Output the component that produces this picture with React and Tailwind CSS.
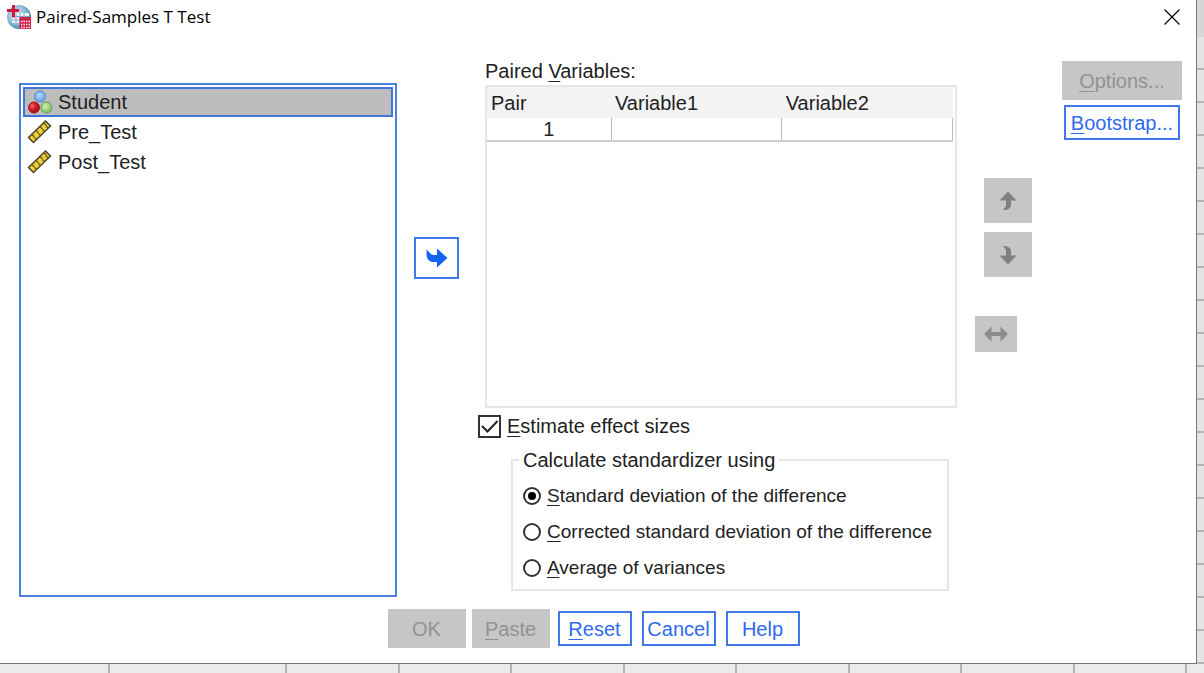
import { useState } from "react";

const variables = [
  { name: "Student", type: "nominal" },
  { name: "Pre_Test", type: "scale" },
  { name: "Post_Test", type: "scale" },
];

const standardizers = [
  { id: "sd", key: "S", rest: "tandard deviation of the difference" },
  { id: "corrected", key: "C", rest: "orrected standard deviation of the difference" },
  { id: "average", key: "A", rest: "verage of variances" },
];

function AppIcon() {
  return (
    <svg width="24" height="24" viewBox="0 0 24 24" aria-hidden="true">
      <defs>
        <radialGradient id="globe" cx="0.4" cy="0.4" r="0.65">
          <stop offset="0" stopColor="#d5e8f4" />
          <stop offset="0.6" stopColor="#8dbbd8" />
          <stop offset="1" stopColor="#3f7ba6" />
        </radialGradient>
      </defs>
      <circle cx="12" cy="12" r="12" fill="url(#globe)" />
      <rect x="5" y="8" width="17" height="10" fill="#eef6fc" />
      <path d="M5 11.500h17M5 15h17M9 8v10M13 8v10M17 8v10" stroke="#82a9cd" strokeWidth="1" />
      <path d="M6.500 0v12.500M0 5.500h12" stroke="#d3173f" strokeWidth="3" />
      <rect x="12.500" y="12" width="11.500" height="12" fill="#cf2448" />
      <path d="M14 16.500h9M14 19.500h9M14 22.500h9" stroke="#fbe4e9" strokeWidth="1.500" strokeDasharray="1.500 1" />
    </svg>
  );
}

function NominalIcon() {
  return (
    <svg width="26" height="24" viewBox="0 0 26 24" aria-hidden="true">
      <defs>
        <radialGradient id="ballBlue" cx="0.45" cy="0.4" r="0.6">
          <stop offset="0" stopColor="#b4d6fa" />
          <stop offset="1" stopColor="#68a2e2" />
        </radialGradient>
        <radialGradient id="ballRed" cx="0.35" cy="0.35" r="0.65">
          <stop offset="0" stopColor="#ee6a70" />
          <stop offset="0.5" stopColor="#cf1f2c" />
          <stop offset="1" stopColor="#a80f1c" />
        </radialGradient>
        <radialGradient id="ballGreen" cx="0.4" cy="0.4" r="0.6">
          <stop offset="0" stopColor="#cdeeb0" />
          <stop offset="1" stopColor="#82bd62" />
        </radialGradient>
      </defs>
      <circle cx="13" cy="6.500" r="5.500" fill="url(#ballBlue)" stroke="#4b84cf" />
      <circle cx="7" cy="17.500" r="5.500" fill="url(#ballRed)" stroke="#a5121e" />
      <circle cx="19.500" cy="17.500" r="5.500" fill="url(#ballGreen)" stroke="#64a049" />
    </svg>
  );
}

function ScaleIcon() {
  return (
    <svg width="26" height="24" viewBox="0 0 26 24" aria-hidden="true">
      <path d="M1.500 17.500L18.500 1L23.500 6L6.500 22.500Z" fill="#f0cf34" stroke="#4b4632" strokeWidth="1.500" />
      <path
        d="M5 14.500l2.500 2.500M9 10.500l2.500 2.500M13 6.500l2.500 2.500M17 3l2.500 2.500M9.500 19.500l-2-2M13.500 15.500l-2-2M17.500 11.500l-2-2M21 8l-2-2"
        stroke="#5d5220"
        strokeWidth="1.200"
      />
    </svg>
  );
}

function DialogButton({ label, mnemonic, disabled }) {
  const text = (
    <>
      {mnemonic && <span className="underline decoration-1 underline-offset-3">{mnemonic}</span>}
      {label}
    </>
  );
  if (disabled) {
    return (
      <button type="button" disabled className="h-[39px] w-full bg-[#c6c6c6] text-[#929292]">
        {text}
      </button>
    );
  }
  return (
    <div className="p-[2px]">
      <button type="button" className="h-[35px] w-full whitespace-nowrap border-2 border-[#4178e8] bg-white text-[#2f69ee]">
        {text}
      </button>
    </div>
  );
}

function VariableList() {
  const [selected, setSelected] = useState("Student");
  return (
    <ul role="listbox" aria-label="Variables" className="mt-[47px] h-[514px] border-2 border-[#4a80e0] p-[2px]">
      {variables.map((v) => (
        <li
          key={v.name}
          role="option"
          aria-selected={selected === v.name}
          onClick={() => setSelected(v.name)}
          className={
            selected === v.name
              ? "flex h-[30px] items-center gap-[5px] border-2 border-[#3f76d8] bg-[#bdbdbd] pl-[2px]"
              : "flex h-[30px] items-center gap-[5px] border-2 border-transparent pl-[2px]"
          }
        >
          {v.type === "nominal" ? <NominalIcon /> : <ScaleIcon />}
          <span>{v.name}</span>
        </li>
      ))}
    </ul>
  );
}

function PairsTable() {
  return (
    <div className="h-[323px] border-2 border-[#e6e6e6] pr-[2px]">
      <table className="w-full table-fixed border-collapse text-left">
        <thead className="bg-[#f3f3f3]">
          <tr className="h-[31px]">
            <th className="w-[124px] pl-1 font-normal">Pair</th>
            <th className="pl-1 font-normal">Variable1</th>
            <th className="pl-1 font-normal">Variable2</th>
          </tr>
        </thead>
        <tbody>
          <tr className="h-[23px] border-b-2 border-[#cccccc] leading-5">
            <td className="border-r border-[#bdbdbd] text-center">1</td>
            <td className="border-r border-[#bdbdbd]"></td>
            <td className="border-r border-[#bdbdbd]"></td>
          </tr>
        </tbody>
      </table>
    </div>
  );
}

function EffectSizes() {
  const [estimate, setEstimate] = useState(true);
  const [standardizer, setStandardizer] = useState("sd");
  return (
    <>
      <label className="mt-[6px] flex h-6 items-center gap-[6px]">
        <span className="relative flex">
          <input
            type="checkbox"
            checked={estimate}
            onChange={(e) => setEstimate(e.target.checked)}
            className="size-[23px] appearance-none border-2 border-[#333333] bg-white"
          />
          {estimate && (
            <svg className="pointer-events-none absolute inset-0" width="23" height="23" viewBox="0 0 23 23">
              <path d="M4 11l5.500 5.500L19.500 6" fill="none" stroke="#222222" strokeWidth="2" />
            </svg>
          )}
        </span>
        <span>
          <span className="underline decoration-1 underline-offset-3">E</span>stimate effect sizes
        </span>
      </label>
      <fieldset className="mt-[10px] mr-2 ml-[33px] h-[143px] border-2 border-[#e6e6e6] pl-[10px]">
        <legend className="-ml-1 px-1 leading-6">Calculate standardizer using</legend>
        <div className="mt-[6px] flex flex-col text-[19px]">
          {standardizers.map((s) => (
            <label key={s.id} className="flex h-9 items-center gap-[6px] whitespace-nowrap">
              <span className="relative flex">
                <input
                  type="radio"
                  name="standardizer"
                  checked={standardizer === s.id}
                  onChange={() => setStandardizer(s.id)}
                  className="size-[18px] appearance-none rounded-full border-2 border-[#333333] bg-white"
                />
                {standardizer === s.id && (
                  <span className="pointer-events-none absolute inset-[5px] rounded-full bg-black" />
                )}
              </span>
              <span>
                <span className="underline decoration-1 underline-offset-3">{s.key}</span>
                {s.rest}
              </span>
            </label>
          ))}
        </div>
      </fieldset>
    </>
  );
}

function OrderButtons() {
  return (
    <div className="pt-[142px]">
      <div className="ml-[9px] flex flex-col gap-[9px]">
        <button type="button" disabled aria-label="Move up" className="flex h-[45px] w-12 items-center justify-center bg-[#c6c6c6]">
          <svg width="18" height="20" viewBox="0 0 18 20" fill="#808080">
            <path d="M9 0.500L17.500 9.500H12V14C12 17 9 19.500 3.500 19C6 17.500 7 16 7 13V9.500H0.500Z" />
          </svg>
        </button>
        <button type="button" disabled aria-label="Move down" className="flex h-[45px] w-12 items-center justify-center bg-[#c6c6c6]">
          <svg width="18" height="20" viewBox="0 0 18 20" fill="#808080">
            <path d="M9 19.500L17.500 10.500H12V6C12 3 9 0.500 3.500 1C6 2.500 7 4 7 7V10.500H0.500Z" />
          </svg>
        </button>
      </div>
      <button type="button" disabled aria-label="Swap variables" className="mt-[39px] flex h-9 w-[42px] items-center justify-center bg-[#c6c6c6]">
        <svg width="24" height="16" viewBox="0 0 24 16" fill="#8c8c8c">
          <path d="M0 8L7.500 0.500V6H16.500V0.500L24 8L16.500 15.500V10H7.500V15.500Z" />
        </svg>
      </button>
    </div>
  );
}

// Edges of the data sheet that stay visible behind the dialog
function SheetRows() {
  return (
    <div className="flex w-[7px] flex-col overflow-hidden bg-[#e4e4e4]">
      <div className="h-[37px] shrink-0 bg-[#d6d6d6]" />
      {Array.from({ length: 19 }, (_, i) => (
        <div key={i} className="h-[33px] shrink-0 border-b-2 border-[#b5b5b5]" />
      ))}
    </div>
  );
}

function SheetColumns() {
  return (
    <div className="flex h-[9px] overflow-hidden bg-[#ebebeb]">
      <div className="w-[110px] shrink-0 border-r-2 border-[#b5b5b5]" />
      <div className="w-[177px] shrink-0 border-r-2 border-[#b5b5b5]" />
      <div className="grid w-[900px] shrink-0 grid-cols-8">
        {Array.from({ length: 8 }, (_, i) => (
          <div key={i} className="border-r-2 border-[#b5b5b5]" />
        ))}
      </div>
    </div>
  );
}

export default function App() {
  return (
    <div className="flex min-h-screen flex-col bg-[#ebebeb]">
      <div className="flex flex-1">
        <main className="flex min-w-0 flex-1 flex-col border-r border-b border-[#777777] bg-white font-['Liberation_Sans',Arial,sans-serif] text-[20px] leading-6 text-[#222222]">
          <header className="mb-[3px] flex h-[33px] items-center gap-[5px] pr-4 pl-[7px]">
            <AppIcon />
            <h1 className="flex-1 font-['Open_Sans','Noto_Sans',sans-serif] text-[17px] text-black">Paired-Samples T Test</h1>
            <button type="button" aria-label="Close">
              <svg width="16" height="16" viewBox="0 0 16 16">
                <path d="M0.500 0.500L15.500 15.500M15.500 0.500L0.500 15.500" stroke="#000000" strokeWidth="1.200" />
              </svg>
            </button>
          </header>

          <div className="grid grid-cols-[minmax(0,378fr)_81px_minmax(0,479fr)_105px_120px] pr-[14px] pl-[19px]">
            <VariableList />
            <div className="pt-[201px] pl-[17px]">
              <button type="button" aria-label="Add to pairs" className="flex h-[42px] w-[45px] items-center justify-center border-2 border-[#4178e8] bg-white">
                <svg width="22" height="20" viewBox="0 0 22 20" fill="#1264f6">
                  <path d="M0.500 1.500L4.500 5.500C5.500 6.500 6.500 7 8 7H11V0.500L21.500 10L11 19.500V14H7C2.500 14 0.500 10 0.500 6Z" />
                </svg>
              </button>
            </div>
            <div>
              <div className="ml-[7px]">
                <h2 className="mt-[23px] mb-[2px]">
                  Paired <span className="underline decoration-1 underline-offset-3">V</span>ariables:
                </h2>
                <PairsTable />
              </div>
              <EffectSizes />
            </div>
            <div className="pl-[18px]">
              <OrderButtons />
            </div>
            <div className="flex flex-col gap-[3px] pt-[25px]">
              <DialogButton mnemonic="O" label="ptions..." disabled />
              <DialogButton mnemonic="B" label="ootstrap..." />
            </div>
          </div>

          <footer className="mt-3 mb-[15px] flex justify-center pr-[7px]">
            <div className="grid grid-cols-[repeat(5,78px)] gap-[6px]">
              <DialogButton label="OK" disabled />
              <DialogButton mnemonic="P" label="aste" disabled />
              <DialogButton mnemonic="R" label="eset" />
              <DialogButton label="Cancel" />
              <DialogButton label="Help" />
            </div>
          </footer>
        </main>
        <SheetRows />
      </div>
      <SheetColumns />
    </div>
  );
}
